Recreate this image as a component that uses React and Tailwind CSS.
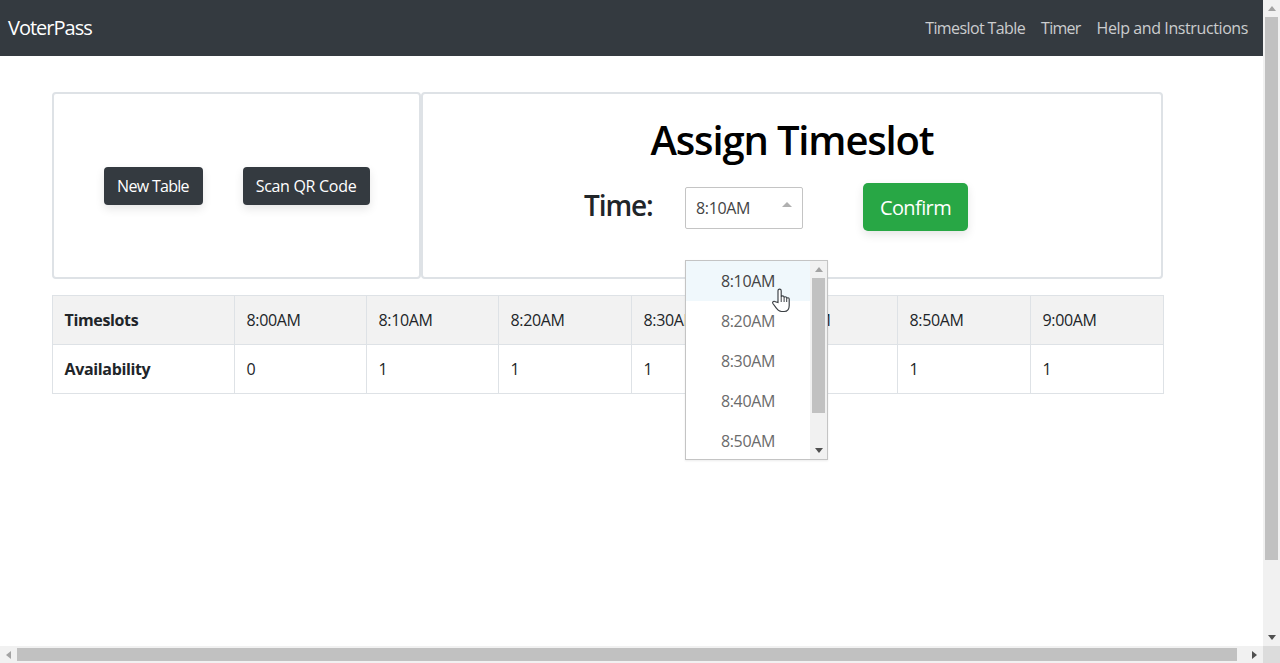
const times = ["8:00AM","8:10AM","8:20AM","8:30AM","8:40AM","8:50AM","9:00AM"];
const avail = ["0","1","1","1","1","1","1"];
const opts = ["8:10AM","8:20AM","8:30AM","8:40AM","8:50AM"];

function Tri({ dir, cls }) {
  const p = { up: "0,5 4,0 8,5", down: "0,0 8,0 4,5", left: "5,0 5,8 0,4", right: "0,0 0,8 5,4" }[dir];
  const s = dir === "up" || dir === "down" ? [8, 5] : [5, 8];
  return <svg width={s[0]} height={s[1]} viewBox={`0 0 ${s[0]} ${s[1]}`} preserveAspectRatio="none" className={cls}><polygon points={p} fill="currentColor" /></svg>;
}

function Hand() {
  return (
    <svg width="18" height="25" viewBox="0 0 18 25" className="absolute left-[772px] top-[288px]">
      <path d="M6 14.500V2.800c0-2.300 3.200-2.300 3.200 0V9c0-1.500 2.700-1.500 2.900 0v.8c0-1.400 2.500-1.400 2.600 0v.9c.2-1.300 2.500-1.200 2.500.3v6.500c0 3-1.500 6-5 6H9.500c-2.500 0-3.700-1.200-5-3.200L.9 15.500c-.9-1.700 1.200-3 2.500-1.700z" fill="#fff" stroke="#3a3f44" strokeWidth="1.150" />
      <path d="M9.200 9v5M12.100 9.500v4.500M14.700 10.500V14" fill="none" stroke="#3a3f44" strokeWidth="1" />
    </svg>
  );
}

export default function App() {
  return (
    <div className="relative grid h-[663px] w-[1280px] grid-cols-[1263px_17px] grid-rows-[646px_17px] overflow-hidden bg-white text-[16px] leading-[24px] text-[#212529] [font-family:'Open_Sans','Noto_Sans',sans-serif] tracking-[-0.35px]">
      <main className="flex flex-col overflow-hidden">
        <nav className="flex h-[56px] shrink-0 items-center justify-between bg-[#343a40] pl-2 pr-[15px]">
          <span className="text-[20px] leading-[30px] text-white tracking-[-1px]">VoterPass</span>
          <div className="flex gap-4 text-[#ffffffbf]">
            <span className="tracking-[-0.6px]">Timeslot Table</span>
            <span className="tracking-[-0.75px]">Timer</span>
            <span className="tracking-[-0.4px]">Help and Instructions</span>
          </div>
        </nav>
        <div className="ml-[52px] flex w-[1112px] flex-col gap-[16px] pt-[36px]">
          <div className="flex h-[187px] w-[1111px]">
            <section className="flex w-[369px] items-center justify-center gap-10 rounded border-2 border-[#dee2e6] pt-[1px]">
              <button className="h-[38px] w-[99px] rounded bg-[#343a40] text-white tracking-[-0.7px] shadow-[0_4px_10px_rgba(0,0,0,0.1)]">New Table</button>
              <button className="h-[38px] w-[127px] rounded bg-[#343a40] text-white tracking-[-0.3px] shadow-[0_4px_10px_rgba(0,0,0,0.1)]">Scan QR Code</button>
            </section>
            <section className="flex flex-1 flex-col items-center rounded border-2 border-[#dee2e6] pt-[22px]">
              <h1 className="text-[40px] font-semibold leading-[48px] text-black tracking-[-1.15px]">Assign Timeslot</h1>
              <div className="mr-[32px] mt-[19px] flex items-start">
                <span className="mt-[5px] w-[69px] whitespace-nowrap text-[28px] font-semibold leading-[34px] tracking-[-1.1px]">Time:</span>
                <div className="ml-[32px] mt-[4px] flex h-[42px] w-[118px] justify-between rounded-[2px] border border-[#c4c4c4] pl-[10px] pr-[10px] text-[#444] leading-[40px]">
                  <span>8:10AM</span>
                  <Tri dir="up" cls="mt-[14px] h-[5px] w-[10px] text-[#b0b0b0]" />
                </div>
                <button className="ml-[60px] h-[48px] w-[105px] rounded-[5px] bg-[#28a745] pt-[1px] text-[20px] text-white tracking-[-0.6px] shadow-[0_4px_10px_rgba(0,0,0,0.1)]">Confirm</button>
              </div>
            </section>
          </div>
          <table className="w-[1111px] table-fixed border-collapse">
            <colgroup>
              <col className="w-[182px]" />
              <col className="w-[132px]" />
              <col className="w-[132px]" />
              <col className="w-[133px]" />
              <col className="w-[133px]" />
              <col className="w-[133px]" />
              <col className="w-[133px]" />
              <col className="w-[133px]" />
            </colgroup>
            <tbody>
              <tr className="h-[49px] bg-[#f2f2f2]">
                <th className="border border-[#dee2e6] pl-[11.5px] pr-3 text-left font-bold">Timeslots</th>
                {times.map(t => <td key={t} className="border border-[#dee2e6] pl-[11.5px] pr-3">{t}</td>)}
              </tr>
              <tr className="h-[49px]">
                <th className="border border-[#dee2e6] pl-[11.5px] pr-3 text-left font-bold">Availability</th>
                {avail.map((a, i) => <td key={i} className="border border-[#dee2e6] pl-[11.5px] pr-3">{a}</td>)}
              </tr>
            </tbody>
          </table>
        </div>
      </main>

      <div className="flex flex-col items-center bg-[#f1f1f1]">
        <Tri dir="up" cls="mt-[6px] text-[#a3a3a3]" />
        <div className="mt-[6px] h-[543px] w-[13px] bg-[#c1c1c1]" />
        <div className="flex-1" />
        <Tri dir="down" cls="mb-[6px] text-[#505050]" />
      </div>
      <div className="flex items-center bg-[#f1f1f1]">
        <Tri dir="left" cls="ml-[6px] text-[#a3a3a3]" />
        <div className="ml-[6px] h-[13px] w-[1220px] bg-[#c1c1c1]" />
        <div className="flex-1" />
        <Tri dir="right" cls="mr-[6px] text-[#505050]" />
      </div>
      <div className="bg-[#dcdcdc]" />

      <div className="absolute left-[685px] top-[260px] flex h-[200px] w-[143px] border border-[#c4c4c4] bg-white shadow-[0_1px_2px_rgba(0,0,0,0.08)]">
        <ul className="flex-1 text-center text-[#6b6b6b]">
          {opts.map((o, i) => (
            <li key={o} className={`h-[40px] leading-[40px] ${i === 0 ? "bg-[#f0f8fc] text-[#444]" : ""}`}>{o}</li>
          ))}
        </ul>
        <div className="flex w-[17px] flex-col items-center bg-[#f1f1f1]">
          <Tri dir="up" cls="mt-[6px] text-[#a3a3a3]" />
          <div className="mt-[6px] h-[135px] w-[13px] bg-[#c1c1c1]" />
          <div className="flex-1" />
          <Tri dir="down" cls="mb-[6px] text-[#505050]" />
        </div>
      </div>
      <Hand />
    </div>
  );
}
